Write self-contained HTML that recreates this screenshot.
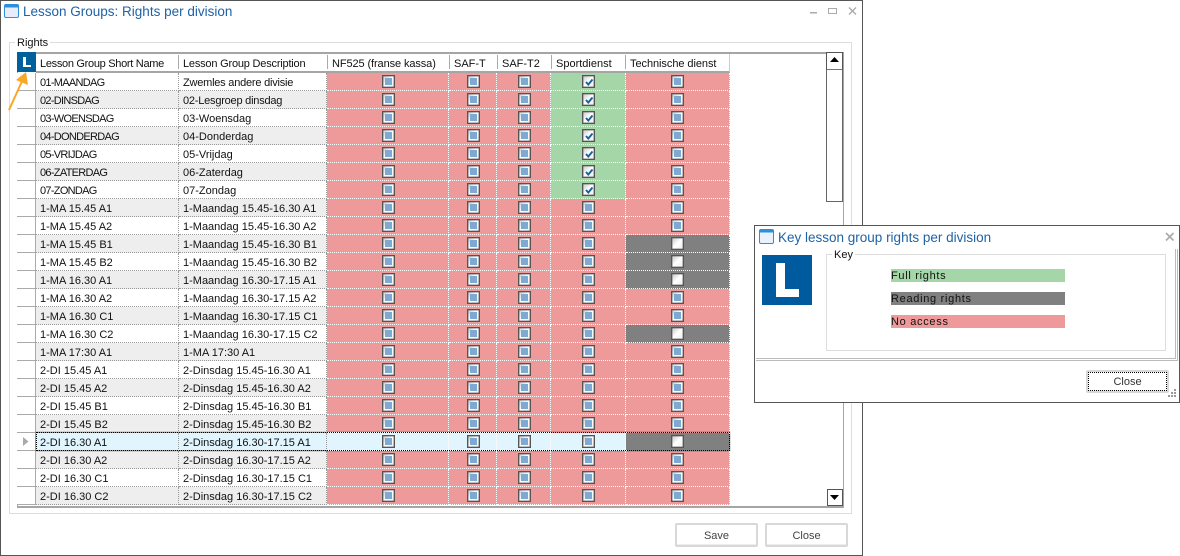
<!DOCTYPE html>
<html><head><meta charset="utf-8"><title>Lesson Groups</title>
<style>
html,body{margin:0;padding:0;background:#fff;width:1180px;height:556px;overflow:hidden;font-family:"Liberation Sans",sans-serif;font-size:11px;color:#111}
.a{position:absolute}
#win{left:0;top:0;width:861px;height:554px;border:1px solid #555}
table{position:absolute;left:17px;top:73px;border-collapse:separate;border-spacing:0;table-layout:fixed;width:713px}
td{height:18px;box-sizing:border-box;padding:4px 0 0 4px;border-bottom:1px dotted #999;border-right:1px dotted #999;white-space:nowrap;overflow:hidden;line-height:13px;background:#fff;vertical-align:top}
tr.s td{background:#e1f5fe}
td:first-child{border-bottom:1px solid #aaa;border-right:1px solid #aaa;background:#fff}
tr:nth-child(even) td{background:#eee}
tr:nth-child(even) td:first-child,tr.s td:first-child{background:#fff}
td.r,td.g,td.k,td.b{padding:2px 0 0;border-bottom:1px dotted #fff;border-right:1px dotted #fff}
td:nth-child(n+4):nth-child(-n+6){padding-left:2px}
tr td.r,tr:nth-child(even) td.r{background:#ef9a9a}
tr td.g,tr:nth-child(even) td.g{background:#a5d6a7}
tr td.k,tr:nth-child(even) td.k{background:#808080}
tr td.b,tr:nth-child(even) td.b{background:#e1f5fe}
td.u{letter-spacing:-.7px}
td.v{letter-spacing:-.22px}
i{display:block;position:relative;width:13px;height:13px;margin:0 auto;box-sizing:border-box;border:1px solid #555;box-shadow:inset 0 0 0 .4px #666;background:linear-gradient(135deg,#c8c8c8,#fff 50%,#eee)}
i.c:after{content:"";position:absolute;left:2px;top:2px;width:7px;height:7px;background:#7ea9d3}
i svg{position:absolute;left:1px;top:1px}
.h{top:54px;height:17px;line-height:20px;white-space:nowrap}
.sep{top:55px;width:1px;height:14px;background:#aaa}
.btn{box-sizing:border-box;border:2px solid #d8d8d8;border-radius:2px;background:#fff;text-align:center;color:#444;line-height:22px;box-shadow:inset 0 -1px 0 #eee}
.bar{left:891px;width:174px;height:13px;line-height:15px;letter-spacing:.7px}
</style></head><body>

<div class="a" id="win"></div>

<svg class="a" style="left:4px;top:4px" width="15" height="14"><rect x=".5" y=".5" width="14" height="13" rx="1.5" fill="#e8ecfa" stroke="#2b8fdc"/><rect x="1" y="1" width="13" height="2.5" fill="#2b8fdc"/></svg>
<div class="a" style="left:23px;top:3px;font-size:13.5px;line-height:17px;color:#1f62a5;white-space:nowrap">Lesson Groups: Rights per division</div>
<svg class="a" style="left:808px;top:5px" width="52" height="12"><rect x="2" y="7" width="7" height="1.500" fill="#aaa"/><rect x="20.500" y="3.500" width="8" height="5" fill="none" stroke="#aaa"/><path d="M41 2.500l7 7M48 2.500l-7 7" stroke="#aaa" stroke-width="1.400"/></svg>

<div class="a" style="left:9px;top:42px;width:841px;height:470px;border:1px solid #ddd"></div>
<div class="a" style="left:15px;top:37px;background:#fff;padding:0 2px;line-height:13px">Rights</div>

<div class="a" style="left:17px;top:52px;width:825px;height:452px;border:1px solid #a5a5a5;border-top:2px solid #a5a5a5;border-bottom:2px solid #a5a5a5"></div>
<div class="a" style="left:36px;top:71px;width:694px;height:2px;background:#a5a5a5"></div>
<div class="a" style="left:729px;top:54px;width:1px;height:18px;background:#ccc"></div>

<div class="a" style="left:17px;top:52px;width:19px;height:20px;background:#00609c"></div>
<div class="a" style="left:23px;top:57px;width:3px;height:10px;background:#fff"></div>
<div class="a" style="left:23px;top:65px;width:8px;height:2px;background:#fff"></div>

<div class="a h" style="left:40px;letter-spacing:-.3px">Lesson Group Short Name</div>
<div class="a h" style="left:183px;letter-spacing:-.2px">Lesson Group Description</div>
<div class="a h" style="left:332px;letter-spacing:-.1px">NF525 (franse kassa)</div>
<div class="a h" style="left:454px">SAF-T</div>
<div class="a h" style="left:502px">SAF-T2</div>
<div class="a h" style="left:556px">Sportdienst</div>
<div class="a h" style="left:630px;letter-spacing:-.06px">Technische dienst</div>
<div class="a sep" style="left:178px"></div>
<div class="a sep" style="left:327px"></div>
<div class="a sep" style="left:449px"></div>
<div class="a sep" style="left:497px"></div>
<div class="a sep" style="left:551px"></div>
<div class="a sep" style="left:625px"></div>

<table>
<colgroup><col style="width:19px"><col style="width:143px"><col style="width:148px"><col style="width:122px"><col style="width:48px"><col style="width:54px"><col style="width:75px"><col style="width:104px"></colgroup>
<tr><td></td><td class="u">01-MAANDAG</td><td class="v">Zwemles andere divisie</td><td class="r"><i class="c"></i></td><td class="r"><i class="c"></i></td><td class="r"><i class="c"></i></td><td class="g"><i><svg width="10" height="10"><path d="M2 5l2.300 2.500L8.500 2.500" fill="none" stroke="#15609f" stroke-width="1.900"/></svg></i></td><td class="r"><i class="c"></i></td></tr>
<tr><td></td><td class="u">02-DINSDAG</td><td class="v">02-Lesgroep dinsdag</td><td class="r"><i class="c"></i></td><td class="r"><i class="c"></i></td><td class="r"><i class="c"></i></td><td class="g"><i><svg width="10" height="10"><path d="M2 5l2.300 2.500L8.500 2.500" fill="none" stroke="#15609f" stroke-width="1.900"/></svg></i></td><td class="r"><i class="c"></i></td></tr>
<tr><td></td><td class="u">03-WOENSDAG</td><td>03-Woensdag</td><td class="r"><i class="c"></i></td><td class="r"><i class="c"></i></td><td class="r"><i class="c"></i></td><td class="g"><i><svg width="10" height="10"><path d="M2 5l2.300 2.500L8.500 2.500" fill="none" stroke="#15609f" stroke-width="1.900"/></svg></i></td><td class="r"><i class="c"></i></td></tr>
<tr><td></td><td class="u">04-DONDERDAG</td><td>04-Donderdag</td><td class="r"><i class="c"></i></td><td class="r"><i class="c"></i></td><td class="r"><i class="c"></i></td><td class="g"><i><svg width="10" height="10"><path d="M2 5l2.300 2.500L8.500 2.500" fill="none" stroke="#15609f" stroke-width="1.900"/></svg></i></td><td class="r"><i class="c"></i></td></tr>
<tr><td></td><td class="u">05-VRIJDAG</td><td>05-Vrijdag</td><td class="r"><i class="c"></i></td><td class="r"><i class="c"></i></td><td class="r"><i class="c"></i></td><td class="g"><i><svg width="10" height="10"><path d="M2 5l2.300 2.500L8.500 2.500" fill="none" stroke="#15609f" stroke-width="1.900"/></svg></i></td><td class="r"><i class="c"></i></td></tr>
<tr><td></td><td class="u">06-ZATERDAG</td><td>06-Zaterdag</td><td class="r"><i class="c"></i></td><td class="r"><i class="c"></i></td><td class="r"><i class="c"></i></td><td class="g"><i><svg width="10" height="10"><path d="M2 5l2.300 2.500L8.500 2.500" fill="none" stroke="#15609f" stroke-width="1.900"/></svg></i></td><td class="r"><i class="c"></i></td></tr>
<tr><td></td><td class="u">07-ZONDAG</td><td>07-Zondag</td><td class="r"><i class="c"></i></td><td class="r"><i class="c"></i></td><td class="r"><i class="c"></i></td><td class="g"><i><svg width="10" height="10"><path d="M2 5l2.300 2.500L8.500 2.500" fill="none" stroke="#15609f" stroke-width="1.900"/></svg></i></td><td class="r"><i class="c"></i></td></tr>
<tr><td></td><td>1-MA 15.45 A1</td><td>1-Maandag 15.45-16.30 A1</td><td class="r"><i class="c"></i></td><td class="r"><i class="c"></i></td><td class="r"><i class="c"></i></td><td class="r"><i class="c"></i></td><td class="r"><i class="c"></i></td></tr>
<tr><td></td><td>1-MA 15.45 A2</td><td>1-Maandag 15.45-16.30 A2</td><td class="r"><i class="c"></i></td><td class="r"><i class="c"></i></td><td class="r"><i class="c"></i></td><td class="r"><i class="c"></i></td><td class="r"><i class="c"></i></td></tr>
<tr><td></td><td>1-MA 15.45 B1</td><td>1-Maandag 15.45-16.30 B1</td><td class="r"><i class="c"></i></td><td class="r"><i class="c"></i></td><td class="r"><i class="c"></i></td><td class="r"><i class="c"></i></td><td class="k"><i></i></td></tr>
<tr><td></td><td>1-MA 15.45 B2</td><td>1-Maandag 15.45-16.30 B2</td><td class="r"><i class="c"></i></td><td class="r"><i class="c"></i></td><td class="r"><i class="c"></i></td><td class="r"><i class="c"></i></td><td class="k"><i></i></td></tr>
<tr><td></td><td>1-MA 16.30 A1</td><td>1-Maandag 16.30-17.15 A1</td><td class="r"><i class="c"></i></td><td class="r"><i class="c"></i></td><td class="r"><i class="c"></i></td><td class="r"><i class="c"></i></td><td class="k"><i></i></td></tr>
<tr><td></td><td>1-MA 16.30 A2</td><td>1-Maandag 16.30-17.15 A2</td><td class="r"><i class="c"></i></td><td class="r"><i class="c"></i></td><td class="r"><i class="c"></i></td><td class="r"><i class="c"></i></td><td class="r"><i class="c"></i></td></tr>
<tr><td></td><td>1-MA 16.30 C1</td><td>1-Maandag 16.30-17.15 C1</td><td class="r"><i class="c"></i></td><td class="r"><i class="c"></i></td><td class="r"><i class="c"></i></td><td class="r"><i class="c"></i></td><td class="r"><i class="c"></i></td></tr>
<tr><td></td><td>1-MA 16.30 C2</td><td>1-Maandag 16.30-17.15 C2</td><td class="r"><i class="c"></i></td><td class="r"><i class="c"></i></td><td class="r"><i class="c"></i></td><td class="r"><i class="c"></i></td><td class="k"><i></i></td></tr>
<tr><td></td><td>1-MA 17:30 A1</td><td>1-MA 17:30 A1</td><td class="r"><i class="c"></i></td><td class="r"><i class="c"></i></td><td class="r"><i class="c"></i></td><td class="r"><i class="c"></i></td><td class="r"><i class="c"></i></td></tr>
<tr><td></td><td>2-DI 15.45 A1</td><td>2-Dinsdag 15.45-16.30 A1</td><td class="r"><i class="c"></i></td><td class="r"><i class="c"></i></td><td class="r"><i class="c"></i></td><td class="r"><i class="c"></i></td><td class="r"><i class="c"></i></td></tr>
<tr><td></td><td>2-DI 15.45 A2</td><td>2-Dinsdag 15.45-16.30 A2</td><td class="r"><i class="c"></i></td><td class="r"><i class="c"></i></td><td class="r"><i class="c"></i></td><td class="r"><i class="c"></i></td><td class="r"><i class="c"></i></td></tr>
<tr><td></td><td>2-DI 15.45 B1</td><td>2-Dinsdag 15.45-16.30 B1</td><td class="r"><i class="c"></i></td><td class="r"><i class="c"></i></td><td class="r"><i class="c"></i></td><td class="r"><i class="c"></i></td><td class="r"><i class="c"></i></td></tr>
<tr><td></td><td>2-DI 15.45 B2</td><td>2-Dinsdag 15.45-16.30 B2</td><td class="r"><i class="c"></i></td><td class="r"><i class="c"></i></td><td class="r"><i class="c"></i></td><td class="r"><i class="c"></i></td><td class="r"><i class="c"></i></td></tr>
<tr class="s"><td></td><td>2-DI 16.30 A1</td><td>2-Dinsdag 16.30-17.15 A1</td><td class="b"><i class="c"></i></td><td class="b"><i class="c"></i></td><td class="b"><i class="c"></i></td><td class="b"><i class="c"></i></td><td class="k"><i></i></td></tr>
<tr><td></td><td>2-DI 16.30 A2</td><td>2-Dinsdag 16.30-17.15 A2</td><td class="r"><i class="c"></i></td><td class="r"><i class="c"></i></td><td class="r"><i class="c"></i></td><td class="r"><i class="c"></i></td><td class="r"><i class="c"></i></td></tr>
<tr><td></td><td>2-DI 16.30 C1</td><td>2-Dinsdag 16.30-17.15 C1</td><td class="r"><i class="c"></i></td><td class="r"><i class="c"></i></td><td class="r"><i class="c"></i></td><td class="r"><i class="c"></i></td><td class="r"><i class="c"></i></td></tr>
<tr><td></td><td>2-DI 16.30 C2</td><td>2-Dinsdag 16.30-17.15 C2</td><td class="r"><i class="c"></i></td><td class="r"><i class="c"></i></td><td class="r"><i class="c"></i></td><td class="r"><i class="c"></i></td><td class="r"><i class="c"></i></td></tr>
</table>

<div class="a" style="left:36px;top:432px;width:692px;height:17px;border:1px dotted #000;box-shadow:0 0 0 .5px rgba(0,0,0,.25)"></div>
<svg class="a" style="left:23px;top:437px" width="6" height="9"><path d="M0 0l5.500 4.500L0 9z" fill="#aaa"/></svg>

<svg class="a" style="left:5px;top:70px" width="26" height="42"><path d="M4 40L18 9" stroke="#f9a825" stroke-width="2" fill="none"/><path d="M21 2L23 15L11 10z" fill="#f9a825"/></svg>

<div class="a" style="left:826px;top:52px;width:15px;height:16px;border:1px solid #555;border-bottom:2px solid #777;background:#fff"></div>
<svg class="a" style="left:830px;top:57px" width="10" height="6"><path d="M0 5L4.500 0 9 5z" fill="#000"/></svg>
<div class="a" style="left:826px;top:70px;width:15px;height:131px;border:1px solid #666;border-top:0;background:#fff"></div>
<div class="a" style="left:827px;top:489px;width:14px;height:15px;border:1px solid #555;background:#fff"></div>
<svg class="a" style="left:830px;top:495px" width="10" height="6"><path d="M0 0L4.500 5 9 0z" fill="#000"/></svg>

<div class="a btn" style="left:675px;top:523px;width:83px;height:24px">Save</div>
<div class="a btn" style="left:765px;top:523px;width:83px;height:24px">Close</div>

<div class="a" style="left:754px;top:225px;width:424px;height:176px;background:#fff;border:1px solid #555"></div>
<svg class="a" style="left:759px;top:229px" width="15" height="15"><rect x=".5" y=".5" width="14" height="14" rx="1.500" fill="#e8f1fc" stroke="#2b8fdc"/><rect x="1" y="1" width="13" height="2.500" fill="#2b8fdc"/></svg>
<div class="a" style="left:778px;top:229px;font-size:13.5px;line-height:17px;color:#1f62a5;white-space:nowrap">Key lesson group rights per division</div>
<svg class="a" style="left:1164px;top:231px" width="12" height="12"><path d="M2 2l7.500 7.500M9.500 2L2 9.500" stroke="#aaa" stroke-width="1.600"/></svg>

<div class="a" style="left:762px;top:255px;width:50px;height:50px;background:#005a9e"></div>
<div class="a" style="left:776px;top:263px;width:9px;height:34px;background:#fff"></div>
<div class="a" style="left:776px;top:289px;width:23px;height:8px;background:#fff"></div>

<div class="a" style="left:826px;top:254px;width:338px;height:95px;border:1px solid #ddd"></div>
<div class="a" style="left:832px;top:249px;background:#fff;padding:0 2px;line-height:13px">Key</div>
<div class="a bar" style="top:269px;background:#a5d6a7">Full rights</div>
<div class="a bar" style="top:292px;background:#808080">Reading rights</div>
<div class="a bar" style="top:315px;background:#ef9a9a">No access</div>

<div class="a" style="left:756px;top:358px;width:419px;height:1px;background:#bbb"></div>
<div class="a" style="left:756px;top:360px;width:421px;height:1px;background:#bbb"></div>
<div class="a" style="left:1175px;top:249px;width:1px;height:110px;background:#bbb"></div>
<div class="a" style="left:1177px;top:249px;width:1px;height:112px;background:#bbb"></div>

<div class="a btn" style="left:1086px;top:370px;width:83px;height:23px;line-height:19px;color:#333"><div style="border:1px dotted #000;height:17px;margin:0">Close</div></div>
<svg class="a" style="left:1167px;top:388px" width="12" height="12" fill="#999"><rect x="7" y="1" width="2" height="2"/><rect x="4" y="4" width="2" height="2"/><rect x="7" y="4" width="2" height="2"/><rect x="1" y="7" width="2" height="2"/><rect x="4" y="7" width="2" height="2"/><rect x="7" y="7" width="2" height="2"/></svg>

</body></html>
